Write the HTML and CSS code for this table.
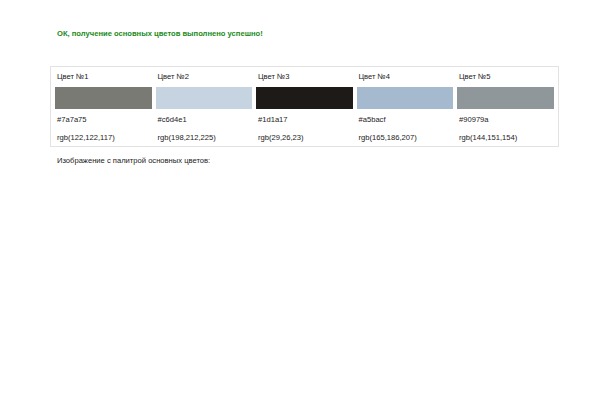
FILE: index.html
```html
<!DOCTYPE html>
<html lang="ru">
<head>
<meta charset="utf-8">
<title>Основные цвета</title>
<link rel="stylesheet" href="styles.css">
</head>
<body>
<div class="page">
  <p class="status">ОК, получение основных цветов выполнено успешно!</p>
  <div class="palette">
    <div class="cell name">Цвет №1</div>
    <div class="cell name">Цвет №2</div>
    <div class="cell name">Цвет №3</div>
    <div class="cell name">Цвет №4</div>
    <div class="cell name">Цвет №5</div>
    <div class="swatch" style="background:#7a7a75"></div>
    <div class="swatch" style="background:#c6d4e1"></div>
    <div class="swatch" style="background:#1d1a17"></div>
    <div class="swatch" style="background:#a5bacf"></div>
    <div class="swatch" style="background:#90979a"></div>
    <div class="cell hex">#7a7a75</div>
    <div class="cell hex">#c6d4e1</div>
    <div class="cell hex">#1d1a17</div>
    <div class="cell hex">#a5bacf</div>
    <div class="cell hex">#90979a</div>
    <div class="cell rgb">rgb(122,122,117)</div>
    <div class="cell rgb">rgb(198,212,225)</div>
    <div class="cell rgb">rgb(29,26,23)</div>
    <div class="cell rgb">rgb(165,186,207)</div>
    <div class="cell rgb">rgb(144,151,154)</div>
  </div>
  <p class="caption">Изображение с палитрой основных цветов:</p>
</div>
</body>
</html>
```
FILE: styles.css
```css
html, body {
  margin: 0;
  padding: 0;
  background: #ffffff;
}
body {
  font-family: "Liberation Sans", Arial, sans-serif;
  font-size: 7.6px;
  color: #222222;
}
.page {
  padding: 29px 0 0 50px;
  width: 509px;
}
.status {
  margin: 0 0 0 7px;
  line-height: 10px;
  font-weight: bold;
  font-size: 7.6px;
  color: #1a8a1a;
}
.palette {
  margin-top: 27px;
  border: 1px solid #e2e2e2;
  padding: 0 4px 2px 4px;
  display: grid;
  grid-template-columns: repeat(5, 96.5px);
  column-gap: 4px;
  grid-template-rows: 20px 22px 21px 14px;
}
.cell {
  padding-left: 2px;
  white-space: nowrap;
}
.name {
  line-height: 19px;
}
.hex {
  line-height: 21px;
}
.rgb {
  line-height: 15px;
}
.swatch {
  height: 22px;
}
.caption {
  margin: 9px 0 0 7px;
  line-height: 10px;
}
```
